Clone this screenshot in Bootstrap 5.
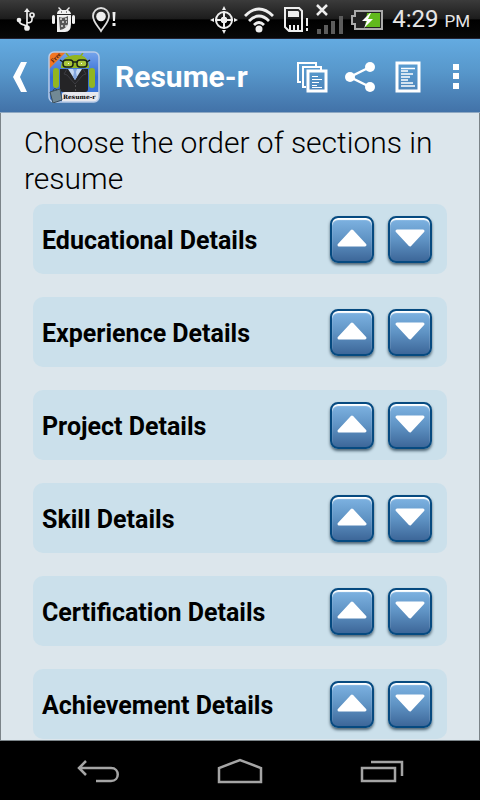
<!DOCTYPE html>
<html lang="en">
<head>
<meta charset="utf-8">
<meta name="viewport" content="width=device-width, initial-scale=1">
<title>Resume-r</title>
<link href="https://cdn.jsdelivr.net/npm/bootstrap@5.3.0/dist/css/bootstrap.min.css" rel="stylesheet">
<style>
body{font-family:Roboto,"Liberation Sans",sans-serif;background:#dce6ec;color:#000}
svg{display:block;flex-shrink:0}
.statusbar{height:39px;background:linear-gradient(#3b3b3b,#1c1c1c 50%,#000 52%,#080808);color:#e6e6e6;padding:2px 10px 0 16px;border-bottom:1px solid #223}
.clock{font-size:24px;line-height:38px;margin-left:8px;white-space:nowrap}
.clock span{font-size:17px}
.appbar{height:74px;background:linear-gradient(#64abe1,#5797cb 45%,#4272a8);border-bottom:1px solid #8fa9c3;padding:2px 15px 0 12px}
.app-logo{margin-left:19px}
.app-title{font-size:30px;font-weight:700;line-height:36px;color:#fff;margin:0 0 0 15px}
.app-actions{gap:16px}
.plain{background:none;border:0;padding:0;color:#fff}
.screen{border:1px solid #7b8489;border-top:0;padding:12px 32px 1px}
.prompt{font-size:30px;line-height:36px;font-weight:300;margin:0 -10px 7px -9px}
.section-list{gap:23px}
.section-item{background:#cbe0eb;border-radius:10px;min-height:70px;padding:0 15px 0 9px}
.section-name{font-size:25px;line-height:30px;font-weight:700;padding-top:3px}
.moves{gap:14px}
.move{width:44px;height:47px;padding:0 0 2px;border:2px solid #064a80;border-radius:8px;background:linear-gradient(#7fb4e3,#5f93c4 50%,#3d6799);box-shadow:inset 0 2px 1px #fff,0 2px 3px #4e6574}
.softkeys{background:#000;min-height:59px;gap:96px;padding-top:3px}
</style>
<script src="https://cdn.jsdelivr.net/npm/bootstrap@5.3.0/dist/js/bootstrap.bundle.min.js"></script>
</head>
<body class="d-flex flex-column min-vh-100">
<div class="statusbar d-flex align-items-center justify-content-between">
  <div class="d-flex align-items-center">
    <svg class="me-3" width="20" height="24" viewBox="0 0 20 24" fill="none" stroke="#eee" stroke-width="1.700"><path d="M11 3v17M11 19C10 16 4 18 3 13M11 15c6 0 5-3 5-6"/><path d="M8 4l3-4 3 4z" fill="#eee" stroke="none"/><circle cx="3" cy="12" r="1.500" fill="#eee"/><circle cx="16" cy="7" r="2"/><circle cx="11" cy="20" r="2" fill="#eee"/></svg>
    <svg class="me-3" width="24" height="26" viewBox="0 0 24 26" fill="#eee"><path d="M5 7c0-3 2-4 3-4L6 1l1-1 3 3h4l3-3 1 1-2 2c2 1 3 3 3 4zM5 8h14v9q0 8-6 8H5z"/><rect y="8" width="3" height="9" rx="1.500"/><rect x="20" y="8" width="3" height="9" rx="1.500"/><path d="M9 5h1m4 0h1" stroke="#222"/><path d="M7 10q5 2 9-1v8q-2 5-8 6z" fill="#555"/><path d="M8 12h2m3 0h2m-5 3h2m2 0h1m-6 4h2m2 0h2" stroke="#ddd" stroke-width="1.500"/></svg>
    <svg width="26" height="26" viewBox="0 0 26 26"><path d="M9 24C6 19 1 15 1 9a8 8 0 0116 0c0 6-5 10-8 15z" fill="none" stroke="#ddd" stroke-width="1.800"/><circle cx="9" cy="9.500" r="4.800" fill="#eee"/><path d="M20.500 5h3l-.5 9h-2zM20.500 16h3v3h-3z" fill="#eee"/></svg>
  </div>
  <div class="d-flex align-items-center">
    <svg width="28" height="28" viewBox="0 0 28 28" fill="none" stroke="#eee"><circle cx="14" cy="14" r="8" stroke-width="2"/><path d="M14 5v18M5 14h18" stroke-width="2"/><circle cx="14" cy="14" r="3" fill="#eee"/><path d="M14 0l2 4h-4zM14 28l-2-4h4zM0 14l4-2v4zM28 14l-4-2v4z" fill="#eee" stroke="none"/></svg>
    <svg class="ms-1" width="34" height="27" viewBox="0 0 34 27" fill="none" stroke="#eee" stroke-width="2.800"><path d="M3 9Q17-5 31 9M7 14Q17 4 27 14M12 18Q17 13 22 18"/><circle cx="17" cy="22" r="3.500" fill="#eee" stroke="none"/></svg>
    <svg class="ms-2" width="26" height="26" viewBox="0 0 26 26" fill="none" stroke="#eee" stroke-width="2"><path d="M1 1h14l3 3v20H5l-4-4z"/><path d="M4 4h10l1 1v5H4z" fill="#eee" stroke="none"/><path d="M6 23v-5m4 5v-5m4 5v-5"/><path d="M23 11v8m0 2v3"/></svg>
    <svg class="ms-1" width="32" height="34" viewBox="0 0 32 34"><path d="M3 2l10 10M13 2L3 12" stroke="#eee" stroke-width="2.500"/><path d="M3 26h4v5H3zM10 22h4v9h-4zM17 18h4v13h-4zM25 13h4v18h-4z" fill="#5c5c5c"/></svg>
    <svg class="ms-1" width="34" height="22" viewBox="0 0 34 22"><path d="M5 2h27v18H5v-5H2V7h3z" fill="#222" stroke="#aaa" stroke-width="2"/><path d="M17 4h13v14H15z" fill="#61b91c"/><path d="M20 4l-8 8h5l-3 7 9-9h-5l3-6z" fill="#fff"/></svg>
    <div class="clock">4:29 <span>PM</span></div>
  </div>
</div>
<header class="appbar d-flex align-items-center">
  <button class="plain" aria-label="Back"><svg width="17" height="32" viewBox="0 0 17 32"><path d="M9 1h6L8 16l7 15H9L1 16z" fill="#fff"/></svg></button>
  <svg class="app-logo" width="52" height="52" viewBox="0 0 52 52" role="img" aria-label="Resume-r logo">
    <defs><linearGradient id="sky" x2="0" y2="1"><stop stop-color="#79a7ed"/><stop offset=".5" stop-color="#336bd2"/><stop offset="1" stop-color="#3f7cd7"/></linearGradient><clipPath id="tile"><rect x="1" y="1" width="50" height="50" rx="5"/></clipPath></defs>
    <g clip-path="url(#tile)"><path fill="url(#sky)" d="M0 0h52v52H0z"/>
    <path d="M18 2l4 5m13-5l-4 5" stroke="#8aaa20" stroke-width="1.500"/><path d="M13 17Q13 5 27 4t14 13z" fill="#92b521"/>
    <rect x="5" y="17" width="6" height="20" rx="3" fill="#92b521"/><rect x="41" y="17" width="6" height="20" rx="3" fill="#92b521"/>
    <path d="M12 18h28v20q0 3-3 3H15q-3 0-3-3z" fill="#242426"/><path d="M20 18h14l-7 11z" fill="#c4d8f2"/><path d="M25 18h4l-1 3 1 5-2 3-2-3 1-5z" fill="#81a5de"/><path d="M19 18l-3 5 3 1 8 9 8-9 3-1-3-5" fill="none" stroke="#3c3c42"/><path d="M27 35h1m-1 4h1" stroke="#777"/>
    <g fill="#a9c63c" stroke="#18221a" stroke-width="1.500"><rect x="15" y="9" width="10" height="7" rx="3"/><rect x="29" y="9" width="10" height="7" rx="3"/><path d="M25 11h4M12 9l3 2m24 0l3-2"/></g><path d="M20 12h1v1h-1zm13 0h1v1h-1z" fill="#fff"/>
    <path d="M0 0h19L0 19z" fill="#f27622"/><text transform="translate(5 12) rotate(-45)" font-family="Liberation Serif,serif" font-size="6" font-weight="700" fill="#45200f">Free</text>
    <path d="M14 43q0-2 3-2h35v12H14z" fill="#e7e8ee"/></g>
    <rect x="1" y="1" width="50" height="50" rx="5" fill="none" stroke="#b9cce8" stroke-width="1.500"/>
    <path d="M2 41l10-3 2 11-9 3z" fill="#718995" stroke="#3a4d5b"/><path d="M5 40q1-4 4-1" fill="none" stroke="#31424d"/>
    <text x="15" y="48" font-family="DejaVu Serif,serif" font-size="6" font-weight="700" fill="#000">Resume-r</text>
  </svg>
  <h1 class="app-title">Resume-r</h1>
  <div class="app-actions d-flex align-items-center ms-auto">
    <button class="plain" aria-label="Copies"><svg width="32" height="32" viewBox="0 0 32 32" fill="none" stroke="#fff"><path d="M5 21H2V2h18v3M10 26H7V6h18v3" stroke-width="2"/><path d="M12 10h18v20H12z" stroke-width="3"/><path d="M16 15.500h6m-6 3h10m-10 3h7m-7 3h5m-5 2h10" stroke-width="1"/></svg></button>
    <button class="plain" aria-label="Share"><svg width="32" height="32" viewBox="0 0 32 32"><path d="M26 6L6 16l20 10" fill="none" stroke="#fff" stroke-width="2.500"/><g fill="#fff"><circle cx="26" cy="6" r="5"/><circle cx="6" cy="16" r="5"/><circle cx="26" cy="26" r="5"/></g></svg></button>
    <button class="plain" aria-label="Preview resume"><svg width="32" height="32" viewBox="-3 0 32 32" fill="none" stroke="#fff"><path d="M2 2h22v28H2z" stroke-width="3"/><path d="M6 7.500h14m-14 2.500h7m-7 3h12m-12 3h9m-9 3h7m-7 3h12m-12 3h14" stroke-width="1.500"/></svg></button>
    <button class="plain" aria-label="More options"><svg width="25" height="32" viewBox="-9 0 25 32"><path d="M4 3h6v6H4zM4 12h6v6H4zM4 22h6v6H4z" fill="#fff"/></svg></button>
  </div>
</header>
<main class="screen flex-grow-1">
  <h2 class="prompt">Choose the order of sections in resume</h2>
  <div class="section-list d-grid" id="sections"></div>
</main>
<nav class="softkeys d-flex align-items-center justify-content-center" aria-label="System">
  <button class="plain" aria-label="System back"><svg width="44" height="26" viewBox="0 0 44 26" fill="none" stroke="#a5a5a5" stroke-width="2.500"><path d="M10 2L3 9l7 7M3 9h32c9 0 9 13 0 13H20"/></svg></button>
  <button class="plain" aria-label="Home"><svg width="48" height="28" viewBox="0 0 48 28" fill="none" stroke="#a5a5a5" stroke-width="2.500"><path d="M3 24V10l21-8 21 8v14z"/></svg></button>
  <button class="plain" aria-label="Recent apps"><svg width="44" height="26" viewBox="0 0 44 26" fill="none" stroke="#a5a5a5" stroke-width="2.500"><path d="M2 9h33v13H2zM11 3h31v14"/></svg></button>
</nav>
<script>
const names=["Educational","Experience","Project","Skill","Certification","Achievement"];
const arrow=d=>`<svg class="mx-auto" width="32" height="22" viewBox="0 0 32 22"><path d="${d}" fill="#fff" stroke="#fff" stroke-width="3" stroke-linejoin="round"/></svg>`;
document.getElementById("sections").innerHTML=names.map(n=>`<div class="section-item d-flex align-items-center">
<span class="section-name me-auto">${n} Details</span>
<div class="moves d-flex"><button class="move" aria-label="Move ${n} Details up">${arrow("M16 4L29 18H3z")}</button>
<button class="move" aria-label="Move ${n} Details down">${arrow("M3 4h26L16 18z")}</button></div></div>`).join("");
</script>
</body>
</html>
